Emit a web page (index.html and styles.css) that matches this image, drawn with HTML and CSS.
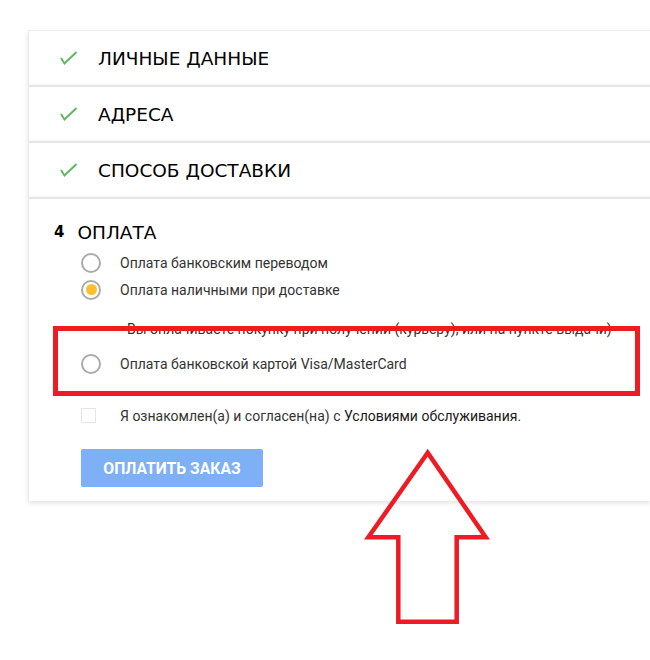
FILE: index.html
```html
<!DOCTYPE html>
<html lang="ru">
<head>
<meta charset="utf-8">
<title>Оформление заказа</title>
<link rel="stylesheet" href="styles.css">
</head>
<body>
<div class="page">
  <div class="card">
    <div class="step done">
      <svg class="check" width="20" height="16" viewBox="0 0 20 16"><polyline points="2,7 5.5,12.5 17.5,1" fill="none" stroke="#5cb85c" stroke-width="2"/></svg>
      <span class="step-title">ЛИЧНЫЕ ДАННЫЕ</span>
    </div>
    <div class="step done">
      <svg class="check" width="20" height="16" viewBox="0 0 20 16"><polyline points="2,7 5.5,12.5 17.5,1" fill="none" stroke="#5cb85c" stroke-width="2"/></svg>
      <span class="step-title">АДРЕСА</span>
    </div>
    <div class="step done">
      <svg class="check" width="20" height="16" viewBox="0 0 20 16"><polyline points="2,7 5.5,12.5 17.5,1" fill="none" stroke="#5cb85c" stroke-width="2"/></svg>
      <span class="step-title">СПОСОБ ДОСТАВКИ</span>
    </div>
    <div class="payment">
      <div class="pay-head"><span class="num">4</span><span class="step-title">ОПЛАТА</span></div>
      <div class="options">
        <div class="option"><span class="radio"></span><span class="label">Оплата банковским переводом</span></div>
        <div class="option"><span class="radio checked"></span><span class="label">Оплата наличными при доставке</span></div>
        <div class="desc">Вы оплачиваете покупку при получении (курьеру), или на пункте выдачи)</div>
        <div class="option third"><span class="radio"></span><span class="label">Оплата банковской картой Visa/MasterCard</span></div>
      </div>
      <div class="agree"><span class="checkbox"></span><span class="label">Я ознакомлен(а) и согласен(на) с <a class="terms">Условиями обслуживания</a>.</span></div>
      <button class="pay-btn">ОПЛАТИТЬ ЗАКАЗ</button>
    </div>
  </div>
  <div class="highlight"></div>
  <svg class="arrow" width="140" height="190" viewBox="0 0 140 190">
    <polygon points="67.7,7.7 8.3,92.3 38.3,92.3 38.3,176.7 96.7,176.7 96.7,92.3 125.7,92.3" fill="none" stroke="#ed1c24" stroke-width="4.5" stroke-linejoin="miter"/>
  </svg>
</div>
</body>
</html>
```
FILE: styles.css
```css
html, body {
  margin: 0;
  padding: 0;
  background: #ffffff;
  overflow: hidden;
}
.page {
  position: relative;
  width: 650px;
  height: 660px;
  padding-top: 30px;
  padding-left: 28px;
  box-sizing: border-box;
  font-family: Roboto, "Liberation Sans", sans-serif;
}
.card {
  width: 622px;
  background: #fff;
  border-top: 1px solid #ececec;
  border-left: 1px solid #ececec;
  box-shadow: 0 2px 5px rgba(0,0,0,0.12);
}
.step {
  height: 54px;
  display: flex;
  align-items: center;
  border-bottom: 2px solid #e6e6e6;
  box-shadow: inset 0 -3px 3px -2px rgba(0,0,0,0.04);
}
.check {
  margin-left: 30px;
  margin-top: 2px;
}
.step-title {
  font-family: "DejaVu Sans", sans-serif;
  font-size: 18.5px;
  color: #000;
  margin-left: 19px;
}
.payment {
  padding: 23px 0 14px 0;
}
.pay-head {
  display: flex;
  align-items: center;
  height: 20px;
}
.num {
  font-family: "DejaVu Sans", sans-serif;
  font-weight: bold;
  font-size: 15px;
  margin-left: 25px;
  color: #000;
}
.pay-head .step-title {
  margin-left: 13px;
}
.options {
  margin-top: 7px;
}
.option {
  display: flex;
  align-items: center;
  height: 27px;
}
.radio {
  width: 16px;
  height: 16px;
  border: 2px solid #ababab;
  border-radius: 50%;
  margin-left: 52px;
  box-sizing: content-box;
  position: relative;
}
.radio.checked::after {
  content: "";
  position: absolute;
  left: 2.5px;
  top: 2.5px;
  width: 11px;
  height: 11px;
  border-radius: 50%;
  background: #fbc02d;
}
.label {
  margin-left: 19px;
  font-size: 14px;
  color: #333;
}
.desc {
  margin-top: 18px;
  margin-left: 98px;
  font-size: 14px;
  color: #333;
  line-height: 16px;
}
.option.third {
  margin-top: 13px;
}
.agree {
  display: flex;
  align-items: center;
  height: 19px;
  margin-top: 29px;
}
.checkbox {
  width: 13px;
  height: 13px;
  border: 1px solid #e6e6e6;
  margin-left: 52px;
}
.agree .label {
  margin-left: 24px;
}
.terms {
  color: #1a1a1a;
}
.pay-btn {
  display: block;
  margin: 24px 0 0 52px;
  width: 182px;
  height: 38px;
  border: none;
  border-radius: 2px;
  background: #7db0f6;
  color: #fff;
  font-family: Roboto, "Liberation Sans", sans-serif;
  font-weight: bold;
  font-size: 15.7px;
}
.highlight {
  position: absolute;
  left: 53px;
  top: 326px;
  width: 587px;
  height: 70px;
  border: 5px solid #ed1c24;
  box-sizing: border-box;
}
.arrow {
  position: absolute;
  left: 360px;
  top: 445px;
}
```
